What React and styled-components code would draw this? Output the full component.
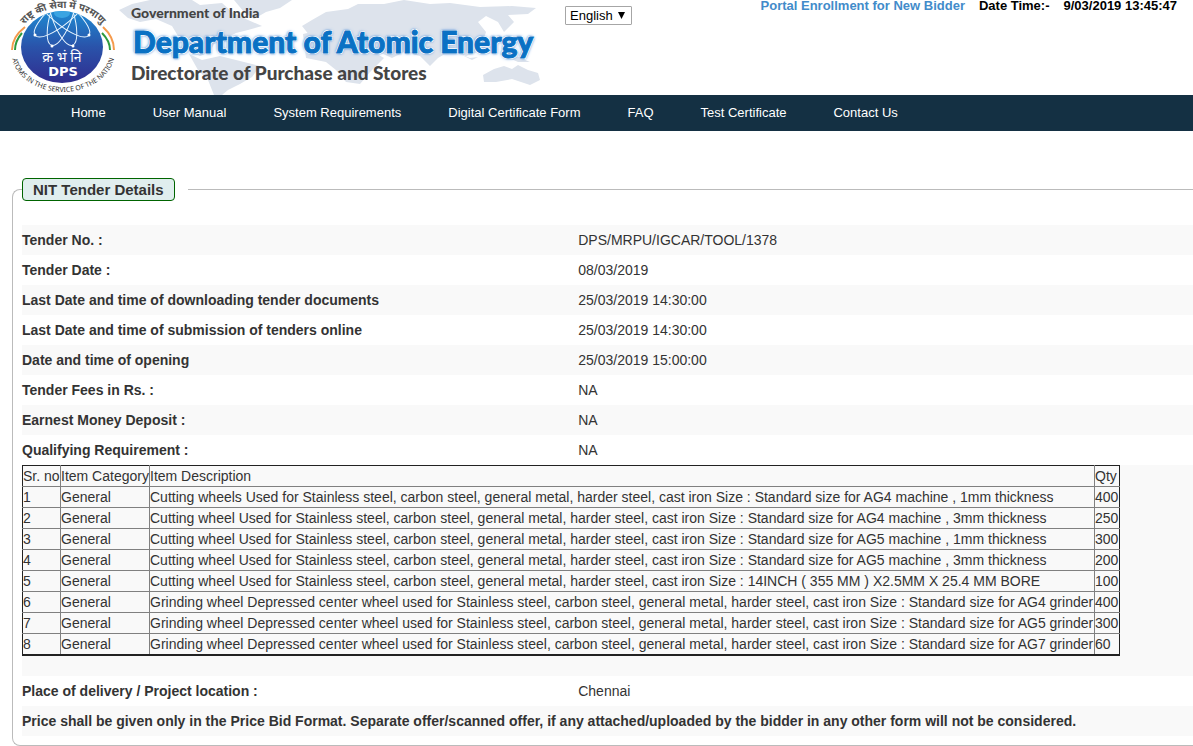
import React from "react";
import styled, { createGlobalStyle } from "styled-components";

const Global = createGlobalStyle`
  * { box-sizing: border-box; }
  body {
    margin: 0;
    background: #fff;
    color: #333;
    font: 14px/20px "Liberation Sans", Arial, sans-serif;
    overflow-x: hidden;
  }
`;

const Header = styled.header`
  display: flex;
  align-items: flex-start;
  height: 95px;
`;

const Brand = styled.div`
  position: relative;
  flex: none;
  display: flex;
  width: 542px;
  height: 95px;
  overflow: hidden;
`;

const WorldMap = styled.svg`
  position: absolute;
  inset: 0;
`;

const Seal = styled.svg`
  position: relative;
  flex: none;
  margin-right: 6px;
`;

const Titles = styled.div`
  position: relative;
  padding-top: 3px;
  font-family: Lato, "Open Sans", sans-serif;
  font-weight: 900;
  white-space: nowrap;
  color: #444;
`;

const Government = styled.p`
  margin: 0;
  font-size: 14px;
  line-height: 20px;
`;

const Department = styled.h1`
  margin: 0;
  padding-left: 2px;
  font-size: 30px;
  line-height: 36px;
  font-weight: 900;
  color: #0a71c4;
  -webkit-text-stroke: 1px #0a71c4;
  text-shadow: 1px 1px #fff, -1px -1px #fff, 1px -1px #fff, -1px 1px #fff,
    0 0 2px #6a9fdc, 1px 1px 2px #6a9fdc, -1px -1px 2px #6a9fdc, 0 0 4px #8fb6e6;
`;

const Directorate = styled.p`
  margin: 0;
  font-size: 19px;
  line-height: 28px;
`;

const Language = styled.select`
  flex: none;
  width: 67px;
  height: 19px;
  margin: 6px 0 0 23px;
  padding: 0 16px 0 4px;
  appearance: none;
  border: 1px solid #a6a6a6;
  border-radius: 1px;
  color: #000;
  font: 13px/17px "Liberation Sans", Arial, sans-serif;
  background: #fff url("data:image/svg+xml,%3Csvg xmlns='http://www.w3.org/2000/svg' width='7' height='7'%3E%3Cpath d='M0 0h7L3.500 7z'/%3E%3C/svg%3E") no-repeat right 6px top 5px;
`;

const Status = styled.div`
  display: flex;
  gap: 14px;
  margin-left: auto;
  padding-right: 16px;
  color: #000;
  font-size: 13px;
  font-weight: bold;
  line-height: 12px;
  white-space: nowrap;
`;

const EnrollLink = styled.a`
  color: #428bca;
  text-decoration: none;
`;

const Nav = styled.nav`
  display: flex;
  gap: 47px;
  padding: 0 71px;
  height: 36px;
  align-items: center;
  background: #143043;
`;

const NavLink = styled.a`
  color: #fff;
  font-size: 13px;
  text-decoration: none;
  white-space: nowrap;
`;

const Main = styled.main`
  padding: 47px 0 0 12px;
`;

const Panel = styled.fieldset`
  min-width: 0;
  margin: 0;
  padding: 24px 0 9px 9px;
  border: 1px solid #bbb;
  border-right: 0;
  border-radius: 8px 0 0 8px;
`;

const Legend = styled.legend`
  padding: 0 13px 0 0;
`;

const LegendLabel = styled.span`
  display: block;
  padding: 0 10px;
  border: 1px solid #006400;
  border-radius: 4px;
  background: #e0eeee;
  font-size: 15px;
  font-weight: bold;
  line-height: 21px;
`;

const Details = styled.table`
  width: 100%;
  table-layout: fixed;
  border-collapse: collapse;
`;

const Row = styled.tr`
  background: ${(p) => (p.$shaded ? "#f9f9f9" : "#fff")};
`;

const Label = styled.th`
  width: ${(p) => (p.colSpan ? "auto" : "47.5%")};
  padding: 5px 0;
  text-align: left;
  font-weight: bold;
`;

const Value = styled.td`
  padding: 5px 0;
`;

const ItemsCell = styled.td`
  padding: 0 0 20px;
`;

const Items = styled.table`
  width: 1098px;
  border: 1px solid #222;
  border-bottom-width: 2px;
  border-collapse: collapse;
  table-layout: fixed;
  white-space: nowrap;
`;

const Cell = styled.td`
  padding: 0;
  border-top: 1px solid #808080;

  & + & {
    border-left: 1px solid #808080;
  }
`;

const HeadCell = styled.th`
  width: ${(p) => p.$width};
  padding: 0;
  text-align: left;
  font-weight: normal;

  & + & {
    border-left: 1px solid #808080;
  }
`;

const links = ["Home", "User Manual", "System Requirements", "Digital Certificate Form", "FAQ", "Test Certificate", "Contact Us"];

const facts = [
  ["Tender No. :", "DPS/MRPU/IGCAR/TOOL/1378"],
  ["Tender Date :", "08/03/2019"],
  ["Last Date and time of downloading tender documents", "25/03/2019 14:30:00"],
  ["Last Date and time of submission of tenders online", "25/03/2019 14:30:00"],
  ["Date and time of opening", "25/03/2019 15:00:00"],
  ["Tender Fees in Rs. :", "NA"],
  ["Earnest Money Deposit :", "NA"],
  ["Qualifying Requirement :", "NA"],
];

const steel = "Used for Stainless steel, carbon steel, general metal, harder steel, cast iron Size :";
const grind = "Grinding wheel Depressed center wheel used for Stainless steel, carbon steel, general metal, harder steel, cast iron Size : Standard size for";

const items = [
  [`Cutting wheels ${steel} Standard size for AG4 machine , 1mm thickness`, 400],
  [`Cutting wheel ${steel} Standard size for AG4 machine , 3mm thickness`, 250],
  [`Cutting wheel ${steel} Standard size for AG5 machine , 1mm thickness`, 300],
  [`Cutting wheel ${steel} Standard size for AG5 machine , 3mm thickness`, 200],
  [`Cutting wheel ${steel} 14INCH ( 355 MM ) X2.5MM X 25.4 MM BORE`, 100],
  [`${grind} AG4 grinder`, 400],
  [`${grind} AG5 grinder`, 300],
  [`${grind} AG7 grinder`, 60],
];

function DpsSeal() {
  return (
    <Seal width="125" height="95" viewBox="0 0 125 95" role="img" aria-label="DPS seal">
      <defs>
        <linearGradient id="disc" x1="0" y1="0" x2="0" y2="1">
          <stop offset="0" stopColor="#1e8ad2" />
          <stop offset="0.5" stopColor="#2a53aa" />
          <stop offset="1" stopColor="#302d8f" />
        </linearGradient>
        <clipPath id="discClip">
          <ellipse cx="62" cy="47" rx="41" ry="36" />
        </clipPath>
        <path id="topArc" d="M22 28 A45 34 0 0 1 104 28" />
        <path id="bottomArc" d="M11 51 A52 41 0 0 0 115 51" />
      </defs>
      <ellipse cx="63" cy="46" rx="52" ry="46" fill="#fff" />
      <ellipse cx="62" cy="47" rx="41" ry="36" fill="url(#disc)" />
      <g fill="none" strokeWidth="2">
        <path d="M25 27Q12 37 12 50" stroke="#f59a4c" />
        <path d="M22 33Q15 41 15 50" stroke="#2d9a3e" />
        <path d="M103 27Q114 37 114 50" stroke="#f59a4c" />
        <path d="M102 33Q110 41 110 50" stroke="#2d9a3e" />
      </g>
      <g clipPath="url(#discClip)">
        <g fill="none" stroke="#eaf6ff" strokeWidth="1">
          <ellipse cx="62" cy="13" rx="11" ry="34" transform="rotate(18 62 13)" />
          <ellipse cx="62" cy="13" rx="11" ry="34" transform="rotate(-18 62 13)" />
          <ellipse cx="62" cy="13" rx="11" ry="35" transform="rotate(50 62 13)" />
          <ellipse cx="62" cy="13" rx="11" ry="35" transform="rotate(-50 62 13)" />
        </g>
        <ellipse cx="62" cy="13" rx="8" ry="5" fill="#3aa4e2" />
      </g>
      <g fill="#fff">
        <circle cx="52" cy="46" r="1.500" />
        <circle cx="73" cy="46" r="1.500" />
        <circle cx="35" cy="35" r="1.500" />
        <circle cx="89" cy="35" r="1.500" />
      </g>
      <text fontFamily="Noto Sans, sans-serif" fontSize="10" fontWeight="bold" fill="#555">
        <textPath href="#topArc" startOffset="50%" textAnchor="middle">राष्ट्र की सेवा में परमाणु</textPath>
      </text>
      <text fontFamily="Noto Sans, sans-serif" fontSize="7" fill="#333">
        <textPath href="#bottomArc" startOffset="50%" textAnchor="middle">ATOMS IN THE SERVICE OF THE NATION</textPath>
      </text>
      <text x="62" y="62" textAnchor="middle" fontFamily="Noto Sans, sans-serif" fontSize="14" fill="#fff">क्र भं नि</text>
      <text x="63" y="76" textAnchor="middle" fontFamily="DejaVu Sans, sans-serif" fontSize="13" fontWeight="bold" fill="#fff">DPS</text>
    </Seal>
  );
}

function Map() {
  return (
    <WorldMap width="542" height="95" viewBox="0 0 542 95" fill="#dde3ec" aria-hidden="true">
      <path d="M119 10L132 4 150 0H192L200 5 222 3 232 12 248 20 262 26 248 30 236 33 226 38 214 44 210 52 200 56 190 52 186 44 178 36 172 26 156 19 140 22 128 18z" />
      <path d="M234 0H292L280 8 266 12 254 19 244 12z" />
      <path d="M189 54L202 60 220 56 236 60 260 66 252 77 240 84 228 90 222 95H214L208 80 198 70z" />
      <path d="M302 26L312 20 326 12 348 9 358 4 384 4 404 0 430 4 450 3 480 7 512 6 536 8 528 14 508 15 514 22 504 32 498 22 486 16 478 22 486 32 482 44 490 54 478 52 466 56 452 50 438 58 430 66 420 56 404 52 392 58 374 50 352 54 330 46 310 36z" />
      <path d="M303 34L320 30 344 36 370 50 384 58 370 72 360 84 346 82 336 70 326 62 306 58z" />
      <path d="M483 75L494 69 504 66 512 69 518 65 528 70 538 73 540 80 530 85 512 79 496 82 484 82z" />
      <path d="M460 54L470 58 478 57 472 60zM500 54L516 56 530 62 518 62z" />
    </WorldMap>
  );
}

export default function App() {
  return (
    <>
      <Global />
      <Header>
        <Brand>
          <Map />
          <DpsSeal />
          <Titles>
            <Government>Government of India</Government>
            <Department>Department of Atomic Energy</Department>
            <Directorate>Directorate of Purchase and Stores</Directorate>
          </Titles>
        </Brand>
        <Language aria-label="Language" defaultValue="English">
          <option>English</option>
          <option>Hindi</option>
        </Language>
        <Status>
          <EnrollLink href="#enroll">Portal Enrollment for New Bidder</EnrollLink>
          <span>Date Time:-</span>
          <time>9/03/2019 13:45:47</time>
        </Status>
      </Header>
      <Nav aria-label="Main">
        {links.map((name) => (
          <NavLink key={name} href={`#${name.toLowerCase().replace(/ /g, "-")}`}>{name}</NavLink>
        ))}
      </Nav>
      <Main>
        <Panel>
          <Legend><LegendLabel>NIT Tender Details</LegendLabel></Legend>
          <Details>
            <tbody>
              {facts.map(([label, value], i) => (
                <Row key={label} $shaded={i % 2 === 0}>
                  <Label scope="row">{label}</Label>
                  <Value>{value}</Value>
                </Row>
              ))}
              <Row $shaded>
                <ItemsCell colSpan={2}>
                  <Items>
                    <thead>
                      <tr>
                        <HeadCell scope="col" $width="38px">Sr. no</HeadCell>
                        <HeadCell scope="col" $width="89px">Item Category</HeadCell>
                        <HeadCell scope="col" $width="auto">Item Description</HeadCell>
                        <HeadCell scope="col" $width="25px">Qty</HeadCell>
                      </tr>
                    </thead>
                    <tbody>
                      {items.map(([description, quantity], i) => (
                        <tr key={description}>
                          <Cell>{i + 1}</Cell>
                          <Cell>General</Cell>
                          <Cell>{description}</Cell>
                          <Cell>{quantity}</Cell>
                        </tr>
                      ))}
                    </tbody>
                  </Items>
                </ItemsCell>
              </Row>
              <Row>
                <Label scope="row">Place of delivery / Project location :</Label>
                <Value>Chennai</Value>
              </Row>
              <Row $shaded>
                <Label scope="row" colSpan={2}>
                  Price shall be given only in the Price Bid Format. Separate offer/scanned offer, if any attached/uploaded by the bidder in any other form will not be considered.
                </Label>
              </Row>
            </tbody>
          </Details>
        </Panel>
      </Main>
    </>
  );
}
